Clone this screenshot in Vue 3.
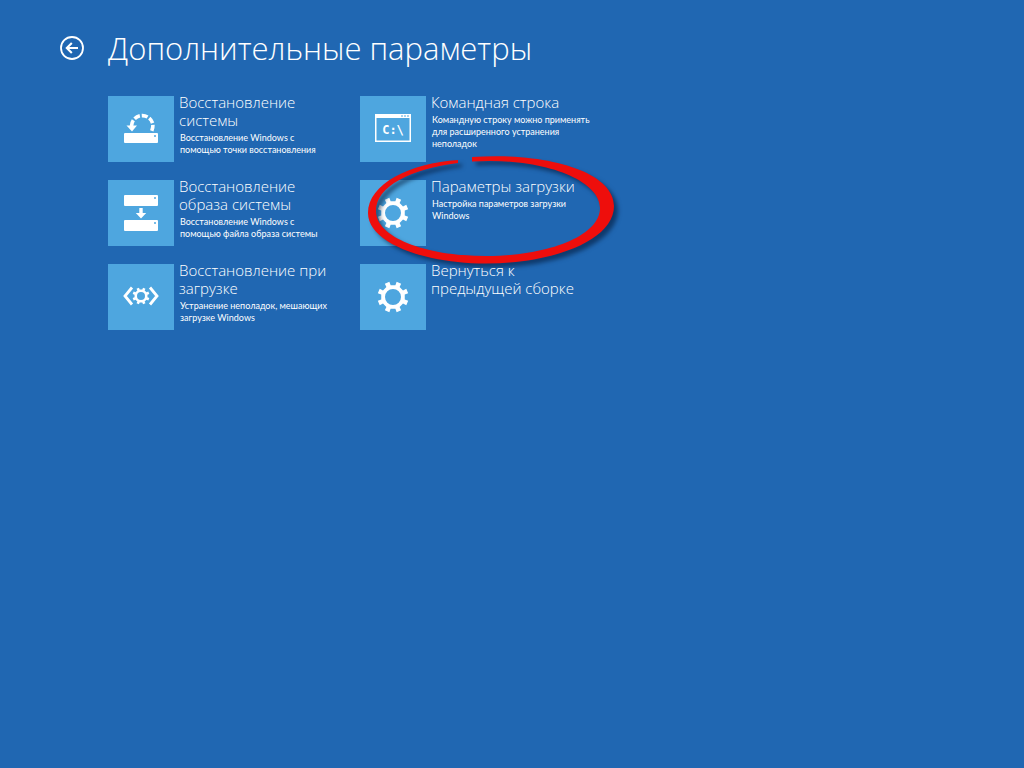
<script setup>
const options = [
  {
    id: 'restore',
    title: 'Восстановление\nсистемы',
    text: 'Восстановление Windows с\nпомощью точки восстановления',
  },
  {
    id: 'console',
    title: 'Командная строка',
    text: 'Командную строку можно применять\nдля расширенного устранения\nнеполадок',
  },
  {
    id: 'image',
    title: 'Восстановление\nобраза системы',
    text: 'Восстановление Windows с\nпомощью файла образа системы',
  },
  {
    id: 'startup',
    title: 'Параметры загрузки',
    text: 'Настройка параметров загрузки\nWindows',
    marked: true,
  },
  {
    id: 'repair',
    title: 'Восстановление при\nзагрузке',
    text: 'Устранение неполадок, мешающих\nзагрузке Windows',
  },
  {
    id: 'rollback',
    title: 'Вернуться к\nпредыдущей сборке',
    text: '',
  },
]

// Outline of an eight-toothed gear with a flat valley at the top.
function gear(cx, cy, outer, inner) {
  const points = []
  for (let i = 0; i < 8; i++) {
    const mid = 22.5 + i * 45
    for (const [offset, radius] of [[-11, inner], [-9, outer], [9, outer], [11, inner]]) {
      const a = ((mid + offset) * Math.PI) / 180
      points.push((cx + radius * Math.cos(a)).toFixed(2) + ' ' + (cy + radius * Math.sin(a)).toFixed(2))
    }
  }
  return 'M' + points.join('L') + 'Z'
}

const largeGear = gear(33, 33, 15.6, 12) + 'M33 25a8 8 0 1 0 0 16a8 8 0 1 0 0-16Z'
const smallGear = gear(33, 32, 8.6, 6.6) + 'M33 28a4 4 0 1 0 0 8a4 4 0 1 0 0-8Z'
</script>

<template>
  <main class="page">
    <header class="header">
      <button class="back" type="button" aria-label="Назад">
        <svg viewBox="0 0 24 24" fill="none" stroke="#fff" stroke-width="1.8">
          <circle cx="12" cy="12" r="11" />
          <path d="M7 12H18M11.800 7L6.800 12l5 5" stroke-width="2.1" />
        </svg>
      </button>
      <h1>Дополнительные параметры</h1>
    </header>

    <div class="options">
      <button v-for="o in options" :key="o.id" class="option" type="button">
        <span class="tile">
          <svg v-if="o.id === 'restore'" viewBox="0 0 66 66">
            <path d="M23.500 30A10.800 10.800 0 0 1 44.700 27.500Q45.500 31 43.500 35.500" fill="none" stroke="#fff" stroke-width="3.6" stroke-dasharray="6 2" />
            <path d="M18.500 29.500h10.500L24 35.500z" fill="#fff" />
            <path d="M17 37h32q1 0 1 1v8q0 1-1 1H17q-1 0-1-1v-8q0-1 1-1z" fill="#fff" />
            <circle cx="47" cy="40" r="1" fill="#4ea6df" />
          </svg>
          <svg v-else-if="o.id === 'console'" viewBox="0 0 66 66">
            <path d="M15 18h36v28H15zM16.500 22v22.500h33V22z" fill="#fff" fill-rule="evenodd" />
            <path d="M41 20h8" stroke="#4ea6df" stroke-width="1" stroke-dasharray="2 1" />
            <text x="33" y="38" text-anchor="middle" fill="#fff">C:\</text>
          </svg>
          <svg v-else-if="o.id === 'image'" viewBox="0 0 66 66">
            <path d="M17 15h32q1 0 1 1v9q0 1-1 1H17q-1 0-1-1v-9q0-1 1-1zM17 40h32q1 0 1 1v9q0 1-1 1H17q-1 0-1-1v-9q0-1 1-1zM31.300 28h3.400v5h3.500L33 38.500 27.800 33h3.500z" fill="#fff" />
            <circle cx="47" cy="18" r="1" fill="#4ea6df" />
            <circle cx="47" cy="43" r="1" fill="#4ea6df" />
          </svg>
          <svg v-else-if="o.id === 'repair'" viewBox="0 0 66 66">
            <path :d="smallGear" fill="#fff" fill-rule="evenodd" />
            <path d="M24 23.500L17 32l7 8.500M42 23.500l7 8.500-7 8.500" fill="none" stroke="#fff" stroke-width="2.8" />
          </svg>
          <svg v-else viewBox="0 0 66 66">
            <path :d="largeGear" fill="#fff" fill-rule="evenodd" />
          </svg>
        </span>
        <span class="copy">
          <span class="title">{{ o.title }}</span>
          <span v-if="o.text" class="text">{{ o.text }}</span>
        </span>
        <svg v-if="o.marked" class="mark" viewBox="0 0 264 120" aria-hidden="true">
          <path
            d="M112 5C188 0 254 20 254 54C254 89 192 111.500 126 111.500C62 111.500 8 90 8 61C8 32 50 11 98 8L98 11C51 17 16 34 16 59C16 85 64 104 126 104C188 104 240 84 240 56C240 27 180 5 112 9.500Z"
            fill="#ee0e0c"
          />
        </svg>
      </button>
    </div>
  </main>
</template>

<style>
html,
body {
  min-height: 100%;
  background: #2067b2;
}
</style>

<style scoped>
.page {
  padding: 24px 60px;
  color: #fff;
  font-family: "Open Sans", "Noto Sans", sans-serif;
}

.header {
  display: flex;
  align-items: center;
  gap: 24px;
}

button {
  margin: 0;
  padding: 0;
  border: 0;
  background: none;
  color: inherit;
  font-family: inherit;
  text-align: left;
}

.back {
  width: 24px;
  height: 24px;
}

svg {
  display: block;
}

h1 {
  margin: 0;
  font-size: 31px;
  line-height: 48px;
  font-weight: 300;
}

.options {
  display: grid;
  grid-template-columns: repeat(2, 234px);
  gap: 18px;
  margin: 24px 0 0 48px;
}

.option {
  position: relative;
  display: flex;
  gap: 5px;
  align-items: flex-start;
}

.tile {
  flex: none;
  width: 66px;
  height: 66px;
  background: #4ea6df;
}

.tile text {
  font: 700 12px "DejaVu Sans Mono", monospace;
}

.copy {
  height: 66px;
  white-space: pre;
}

.title {
  display: block;
  margin-top: -3px;
  font-size: 15px;
  line-height: 18px;
  font-weight: 300;
}

.text {
  display: block;
  padding: 3px 0 0 1px;
  font-family: Lato, "Noto Sans", sans-serif;
  font-size: 9px;
  line-height: 12px;
}

.mark {
  position: absolute;
  left: 0;
  top: -28px;
  width: 264px;
  height: 120px;
  overflow: visible;
  pointer-events: none;
  filter: drop-shadow(4px 4px 2px rgba(0, 20, 50, 0.55));
}
</style>
